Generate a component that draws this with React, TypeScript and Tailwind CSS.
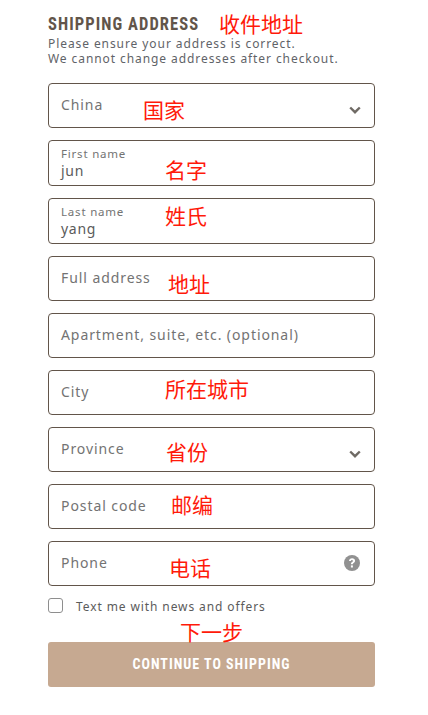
import React from "react";

const font = "[font-family:'Noto_Sans','Open_Sans',sans-serif]";
const cjk = "[font-family:'Noto_Sans_CJK_SC',sans-serif]";

function Chevron() {
  return (
    <svg width="12" height="8" viewBox="0 0 12 8" className="absolute right-[13px] top-[22px]" fill="none">
      <path d="M1.2 1.5 6 6.2l4.8-4.7" stroke="#6f6a64" strokeWidth="2.4" />
    </svg>
  );
}

function Field({ label, value, h = "h-[45px]", chevron, help }: { label: string; value?: string; h?: string; chevron?: boolean; help?: boolean }) {
  return (
    <div className={`relative ${h} rounded-[4px] border border-[#62554a] bg-white pl-3 ${font} flex flex-col`}>
      {value ? (
        <>
          <span className="mt-[6px] text-[11.5px] leading-[14px] tracking-[0.8px] text-[#737373]">{label}</span>
          <span className="text-[14px] leading-[20px] tracking-[0.7px] text-[#5b5b5b]">{value}</span>
        </>
      ) : (
        <span className="mt-[11px] text-[14px] leading-[20px] tracking-[0.92px] text-[#737373]">{label}</span>
      )}
      {chevron && <Chevron />}
      {help && (
        <svg width="16" height="16" viewBox="0 0 16 16" className="absolute right-[14px] top-[13px]">
          <circle cx="8" cy="8" r="8" fill="#919191" />
          <path d="M5 6.1C5 4.3 6.3 3.2 8.1 3.2c1.8 0 3 1 3 2.6 0 1.1-.6 1.7-1.4 2.2-.6.4-.8.7-.8 1.3H6.9c0-1.1.3-1.7 1.1-2.2.6-.4.9-.7.9-1.2 0-.5-.3-.8-.9-.8-.6 0-1 .4-1 1H5Z" fill="#fff" />
          <rect x="6.9" y="10.4" width="2" height="2.1" fill="#fff" />
        </svg>
      )}
    </div>
  );
}

const notes: [string, string][] = [
  ["收件地址", "left-[219px] top-[9px]"],
  ["国家", "left-[143px] top-[95px]"],
  ["名字", "left-[165px] top-[155px]"],
  ["姓氏", "left-[165px] top-[201px]"],
  ["地址", "left-[168px] top-[269px]"],
  ["所在城市", "left-[165px] top-[374px]"],
  ["省份", "left-[166px] top-[437px]"],
  ["邮编", "left-[171px] top-[490px]"],
  ["电话", "left-[169px] top-[553px]"],
  ["下一步", "left-[180px] top-[617px]"],
];

export default function App() {
  return (
    <div className="relative h-[715px] w-[428px] overflow-hidden bg-white pl-[48px] pr-[53px]">
      <h2 className="origin-left scale-x-[0.92] pt-[14px] text-[18px] font-bold leading-[20px] tracking-[1.15px] whitespace-nowrap text-[#62554a] [font-family:'Roboto_Condensed','Liberation_Sans_Narrow','Liberation_Sans',sans-serif]">
        SHIPPING ADDRESS
      </h2>
      <p className={`mt-[2px] text-[12px] leading-[15px] tracking-[0.92px] whitespace-nowrap text-[#5f6368] ${font}`}>
        Please ensure your address is correct.
        <br />
        We cannot change addresses after checkout.
      </p>
      <div className="mt-[17px] flex flex-col gap-3">
        <Field label="China" chevron />
        <Field label="First name" value="jun" h="h-[46px]" />
        <Field label="Last name" value="yang" h="h-[46px]" />
        <Field label="Full address" />
        <Field label="Apartment, suite, etc. (optional)" />
        <Field label="City" />
        <Field label="Province" chevron />
        <Field label="Postal code" />
        <Field label="Phone" help />
      </div>
      <label className={`mt-3 flex h-[15px] items-center ${font}`}>
        <span className="h-[15px] w-[15px] rounded-[3px] border border-[#8e8e8e] bg-white" />
        <span className="ml-[13px] pt-[2px] text-[12px] tracking-[0.9px] text-[#5b5b5b]">Text me with news and offers</span>
      </label>
      <button className="mt-[29px] flex h-[45px] w-full items-center justify-center rounded-[3px] bg-[#c6a991] text-[14px] font-bold tracking-[1px] whitespace-nowrap text-white [font-family:'Roboto_Condensed','Liberation_Sans',sans-serif]">
        CONTINUE TO SHIPPING
      </button>
      {notes.map(([t, pos]) => (
        <span key={t} className={`absolute ${pos} ${cjk} text-[21px] leading-[28px] text-[#ff1a0a]`}>
          {t}
        </span>
      ))}
    </div>
  );
}
